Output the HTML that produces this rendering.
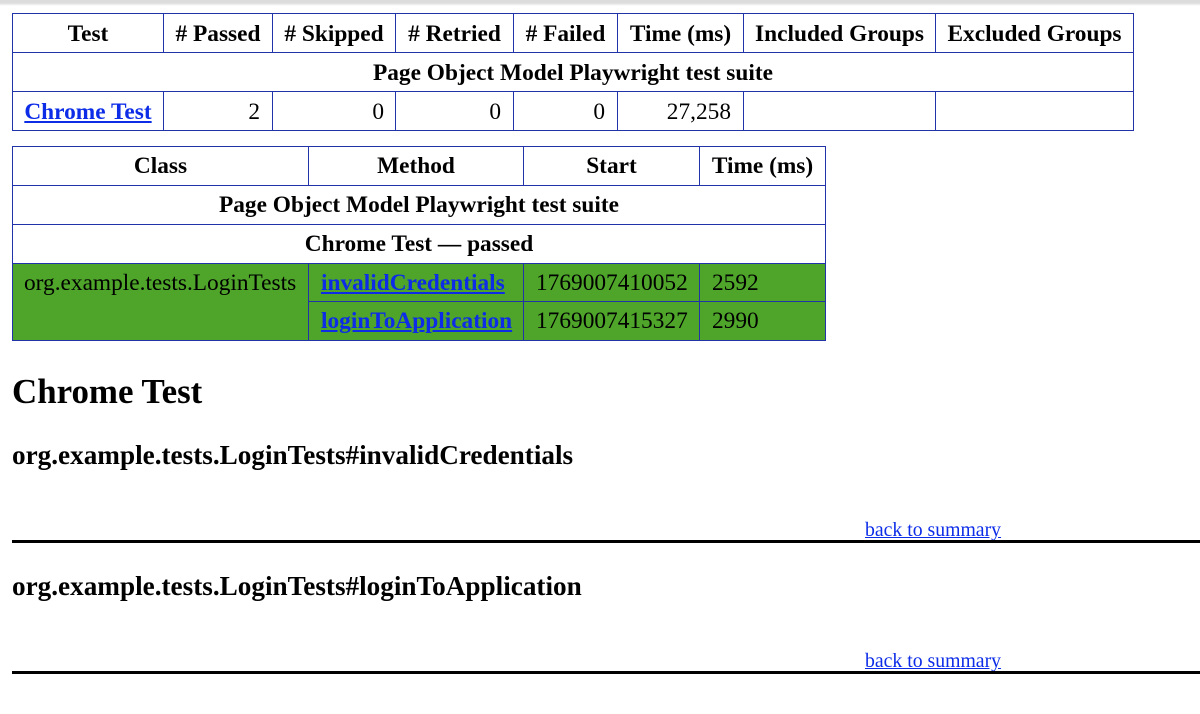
<!DOCTYPE html>
<html><head><meta charset="utf-8"><title>Report</title>
<style>
html,body{margin:0;padding:0;background:#fff;width:1200px;height:714px;overflow:hidden}
body{position:relative;font-family:"Liberation Serif",serif;font-size:23.35px;color:#000}
#w{position:absolute;left:0;top:0;width:1200px;height:714px;background:#fff;filter:blur(0.3px)}
.l{position:absolute;background:#2233aa}
.t{position:absolute;white-space:nowrap;line-height:38px;height:38px}
.c{text-align:center}.r{text-align:right}.b{font-weight:bold}
a{color:#0c2ce8;text-decoration:underline}
.g{position:absolute;background:#4ea52a}
</style></head><body><div id="w">
<div style="position:absolute;left:0;top:0;width:1200px;height:6px;background:linear-gradient(#dcdcdc 0,#dcdcdc 50%,#fff 100%)"></div>

<!-- table 1 lines -->
<div class="l" style="left:12px;top:13px;width:1122px;height:1px"></div>
<div class="l" style="left:12px;top:52px;width:1122px;height:1px"></div>
<div class="l" style="left:12px;top:91px;width:1122px;height:1px"></div>
<div class="l" style="left:12px;top:130px;width:1122px;height:1px"></div>
<div class="l" style="left:12px;top:13px;width:1px;height:118px"></div>
<div class="l" style="left:1133px;top:13px;width:1px;height:118px"></div>
<div class="l" style="left:163px;top:13px;width:1px;height:39px"></div>
<div class="l" style="left:272px;top:13px;width:1px;height:39px"></div>
<div class="l" style="left:395px;top:13px;width:1px;height:39px"></div>
<div class="l" style="left:513px;top:13px;width:1px;height:39px"></div>
<div class="l" style="left:617px;top:13px;width:1px;height:39px"></div>
<div class="l" style="left:743px;top:13px;width:1px;height:39px"></div>
<div class="l" style="left:935px;top:13px;width:1px;height:39px"></div>
<div class="l" style="left:163px;top:91px;width:1px;height:39px"></div>
<div class="l" style="left:272px;top:91px;width:1px;height:39px"></div>
<div class="l" style="left:395px;top:91px;width:1px;height:39px"></div>
<div class="l" style="left:513px;top:91px;width:1px;height:39px"></div>
<div class="l" style="left:617px;top:91px;width:1px;height:39px"></div>
<div class="l" style="left:743px;top:91px;width:1px;height:39px"></div>
<div class="l" style="left:935px;top:91px;width:1px;height:39px"></div>

<div class="t c b" style="left:13px;top:15px;width:150px">Test</div>
<div class="t c b" style="left:164px;top:15px;width:108px"># Passed</div>
<div class="t c b" style="left:273px;top:15px;width:122px"># Skipped</div>
<div class="t c b" style="left:396px;top:15px;width:117px"># Retried</div>
<div class="t c b" style="left:514px;top:15px;width:103px"># Failed</div>
<div class="t c b" style="left:618px;top:15px;width:125px">Time (ms)</div>
<div class="t c b" style="left:744px;top:15px;width:191px">Included Groups</div>
<div class="t c b" style="left:936px;top:15px;width:197px">Excluded Groups</div>
<div class="t c b" style="left:13px;top:54px;width:1120px">Page Object Model Playwright test suite</div>
<div class="t c b" style="left:13px;top:93px;width:150px"><a href="#a">Chrome Test</a></div>
<div class="t r" style="left:164px;top:93px;width:96px">2</div>
<div class="t r" style="left:273px;top:93px;width:111px">0</div>
<div class="t r" style="left:396px;top:93px;width:105px">0</div>
<div class="t r" style="left:514px;top:93px;width:91px">0</div>
<div class="t r" style="left:618px;top:93px;width:113px">27,258</div>

<!-- table 2 -->
<div class="g" style="left:12px;top:263px;width:814px;height:78px"></div>
<div class="l" style="left:12px;top:146px;width:814px;height:1px"></div>
<div class="l" style="left:12px;top:185px;width:814px;height:1px"></div>
<div class="l" style="left:12px;top:224px;width:814px;height:1px"></div>
<div class="l" style="left:12px;top:263px;width:814px;height:1px"></div>
<div class="l" style="left:308px;top:301px;width:518px;height:1px"></div>
<div class="l" style="left:12px;top:340px;width:814px;height:1px"></div>
<div class="l" style="left:12px;top:146px;width:1px;height:195px"></div>
<div class="l" style="left:825px;top:146px;width:1px;height:195px"></div>
<div class="l" style="left:308px;top:146px;width:1px;height:39px"></div>
<div class="l" style="left:523px;top:146px;width:1px;height:39px"></div>
<div class="l" style="left:699px;top:146px;width:1px;height:39px"></div>
<div class="l" style="left:308px;top:263px;width:1px;height:78px"></div>
<div class="l" style="left:523px;top:263px;width:1px;height:78px"></div>
<div class="l" style="left:699px;top:263px;width:1px;height:78px"></div>

<div class="t c b" style="left:13px;top:147px;width:295px">Class</div>
<div class="t c b" style="left:309px;top:147px;width:214px">Method</div>
<div class="t c b" style="left:524px;top:147px;width:175px">Start</div>
<div class="t c b" style="left:700px;top:147px;width:125px">Time (ms)</div>
<div class="t c b" style="left:13px;top:186px;width:812px">Page Object Model Playwright test suite</div>
<div class="t c b" style="left:13px;top:225px;width:812px">Chrome Test — passed</div>
<div class="t" style="left:24px;top:264px">org.example.tests.LoginTests</div>
<div class="t b" style="left:321px;top:264px"><a href="#b">invalidCredentials</a></div>
<div class="t" style="left:536px;top:264px">1769007410052</div>
<div class="t" style="left:712px;top:264px">2592</div>
<div class="t b" style="left:321px;top:302px"><a href="#c">loginToApplication</a></div>
<div class="t" style="left:536px;top:302px">1769007415327</div>
<div class="t" style="left:712px;top:302px">2990</div>

<div class="t b" style="left:12px;top:373px;font-size:34.9px">Chrome Test</div>
<div class="t b" style="left:12px;top:436px;font-size:27.2px">org.example.tests.LoginTests#invalidCredentials</div>
<div class="t" style="left:865px;top:511px;font-size:19.75px"><a href="#top">back to summary</a></div>
<div style="position:absolute;left:12px;top:540px;width:1188px;height:3px;background:#000"></div>
<div class="t b" style="left:12px;top:567px;font-size:27.2px">org.example.tests.LoginTests#loginToApplication</div>
<div class="t" style="left:865px;top:642px;font-size:19.75px"><a href="#top">back to summary</a></div>
<div style="position:absolute;left:12px;top:671px;width:1188px;height:3px;background:#000"></div>
</div></body></html>
